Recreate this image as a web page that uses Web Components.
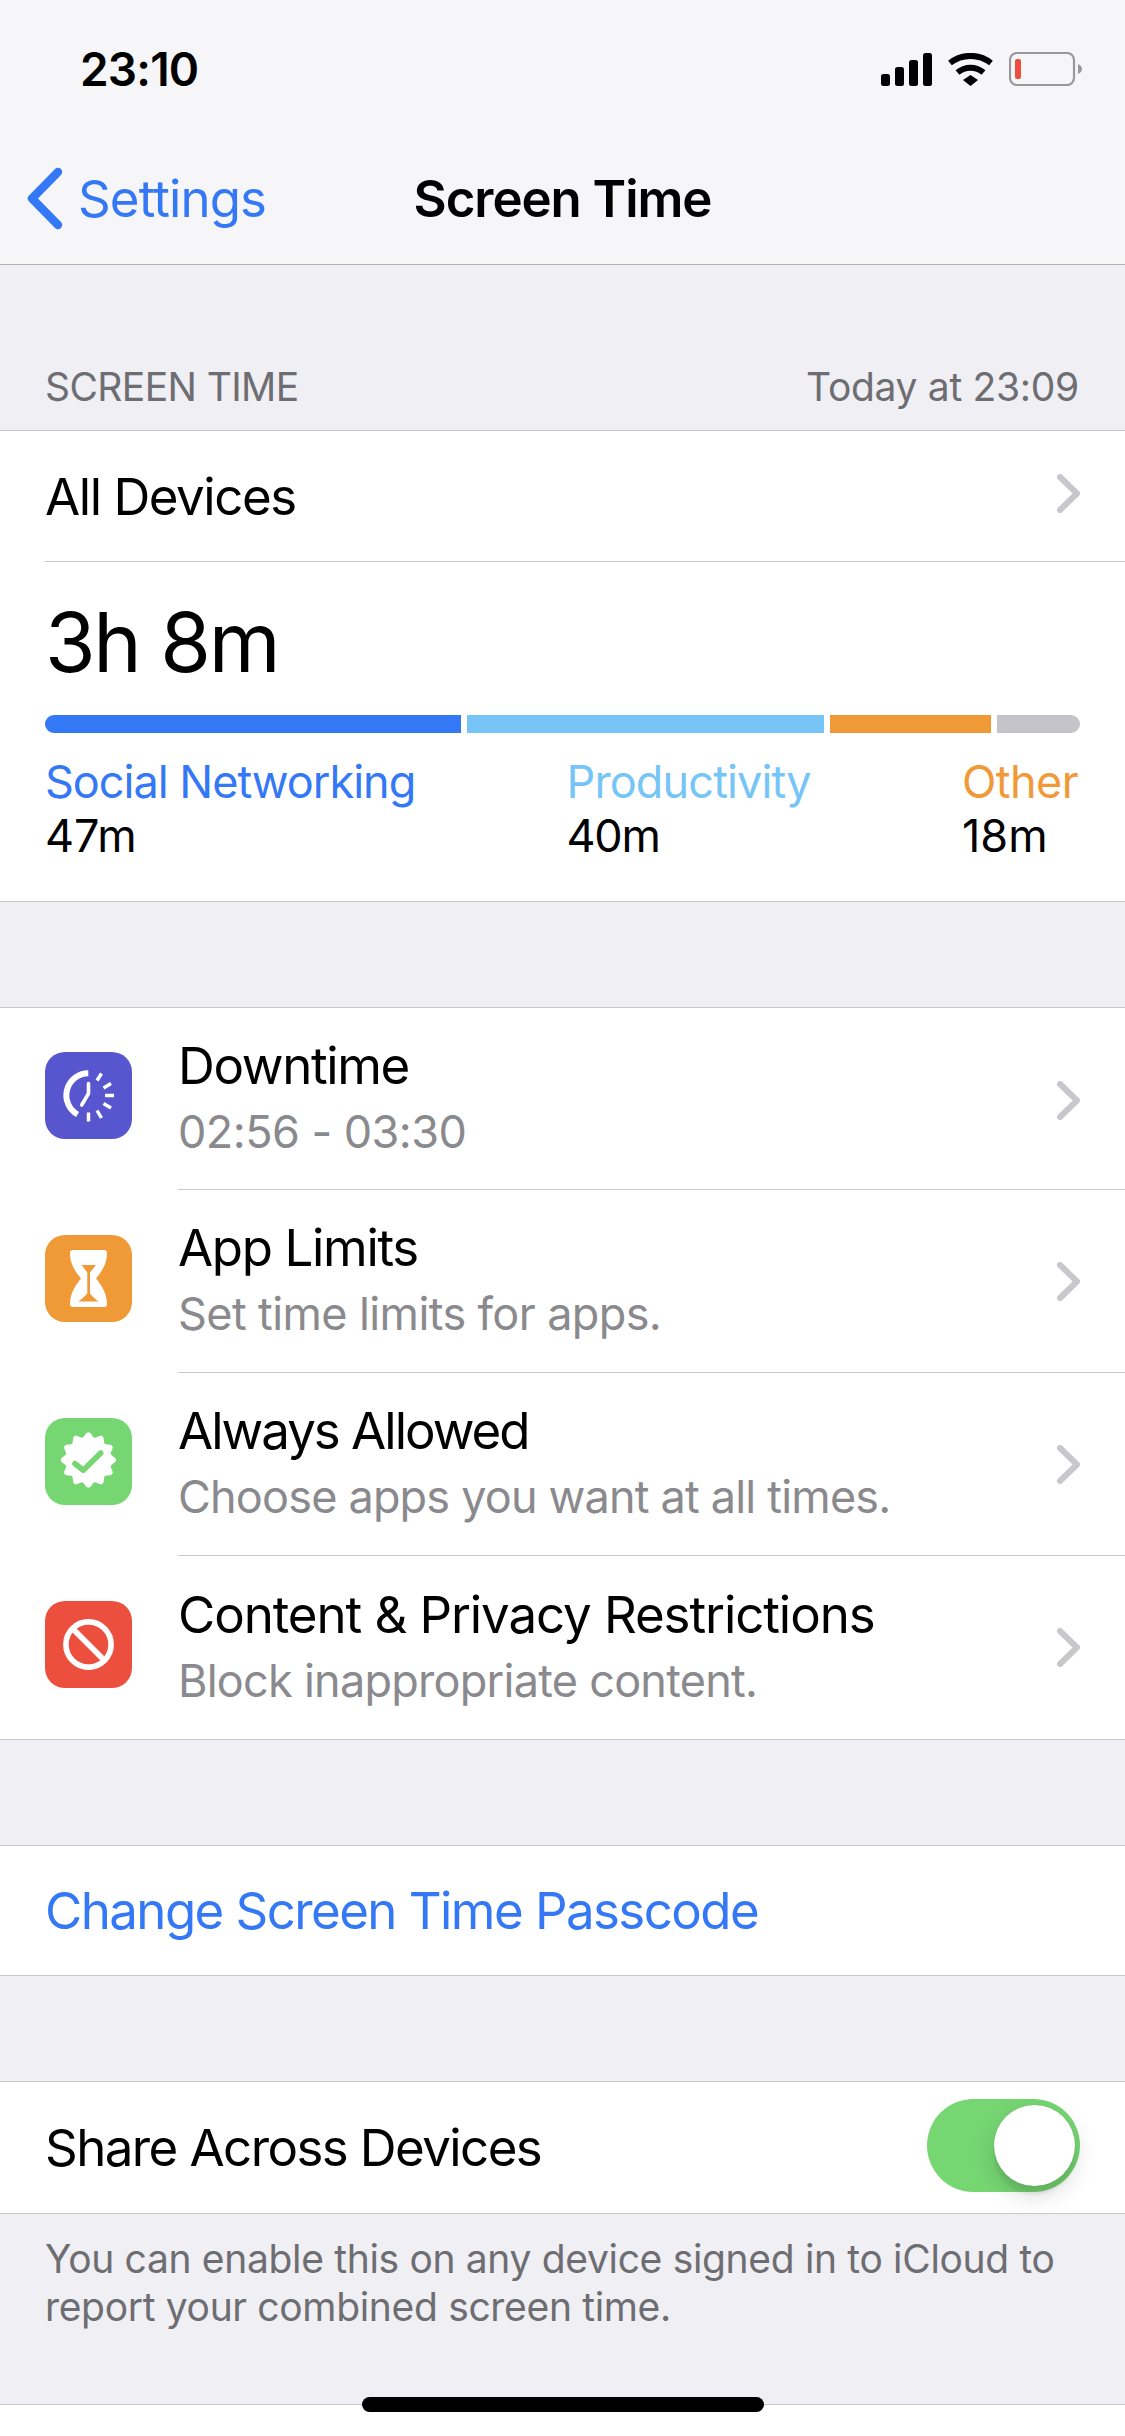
<!DOCTYPE html>
<html lang="en">
<head>
<meta charset="utf-8">
<title>Screen Time</title>
<style>
  html,body{margin:0;padding:0;background:#fff}
  body{width:1125px;height:2436px;overflow:hidden;font-family:'Inter','Liberation Sans',sans-serif;color:#000;position:relative}
</style>
</head>
<body>
<st-nav title-text="Screen Time" back="Settings"></st-nav>
<st-page>
  <st-header left="SCREEN TIME" right="Today at 23:09"></st-header>
  <st-group>
    <st-row label="All Devices" height="131" inset style="--label-ls:-1.45px;--chev-shift:-3px;--label-shift:1.5px"></st-row>
    <st-usage total="3h 8m"></st-usage>
  </st-group>
  <st-gap></st-gap>
  <st-group>
    <st-row label="Downtime" sub="02:56 - 03:30" height="182" inset style="--sub-ls:-.55px;--icon-pad:8px">
      <svg slot="icon" viewBox="0 0 87 87" width="87" height="87">
        <rect width="87" height="87" rx="20" fill="#5856cf"/>
        <path d="M43.3 21.3A22 22 0 0 0 32.6 62.5" fill="none" stroke="#fff" stroke-width="6"/>
        <path d="M43.5 31.5V41.5L36.7 53" fill="none" stroke="#fff" stroke-width="3.6" stroke-linecap="round" stroke-linejoin="round"/>
        <path d="M52 28.5L56.5 21.5M58.5 36L66 31.5M60 43.5H69M58.5 51.5L66 56M52 58.5L56.5 66M43.5 60.5V69.5" fill="none" stroke="#fff" stroke-width="3.4"/>
      </svg>
    </st-row>
    <st-row label="App Limits" sub="Set time limits for apps." height="183" inset style="--sub-ls:-.6px;--chev-shift:0px">
      <svg slot="icon" viewBox="0 0 87 87" width="87" height="87">
        <rect width="87" height="87" rx="20" fill="#f09a37"/>
        <path d="M28 15H59Q62 15 62 18C62 28 58 35 51 43.5C58 52 62 60 62 69Q62 72 59 72H28Q25 72 25 69C25 60 29 52 36 43.5C29 35 25 28 25 18Q25 15 28 15Z" fill="#fff"/>
        <path d="M36.5 30H51L45 37.5V58.5C47 61 50 64 53.5 66.5H33.5C37 64 40 61 42.3 58.5V37.5Z" fill="#f09a37"/>
      </svg>
    </st-row>
    <st-row label="Always Allowed" sub="Choose apps you want at all times." height="183" inset style="--label-ls:-2px;--sub-ls:-.81px;--chev-shift:0px">
      <st-badge slot="icon"></st-badge>
    </st-row>
    <st-row label="Content &amp; Privacy Restrictions" sub="Block inappropriate content." height="183" style="--label-ls:-1.08px;--sub-ls:-.74px;--chev-shift:0px">
      <svg slot="icon" viewBox="0 0 87 87" width="87" height="87">
        <rect width="87" height="87" rx="20" fill="#ec4f3d"/>
        <circle cx="43.5" cy="43.5" r="22.6" fill="none" stroke="#fff" stroke-width="5.6"/>
        <path d="M27.5 27.5L59.5 59.5" stroke="#fff" stroke-width="5.6"/>
      </svg>
    </st-row>
  </st-group>
  <st-gap></st-gap>
  <st-group>
    <st-row label="Change Screen Time Passcode" height="129" tone="link" nochevron style="--label-ls:-1.57px"></st-row>
  </st-group>
  <st-gap></st-gap>
  <st-group>
    <st-row label="Share Across Devices" height="131" nochevron style="--label-ls:-1.58px">
      <st-toggle slot="accessory"></st-toggle>
    </st-row>
  </st-group>
  <st-footer>You can enable this on any device signed in to iCloud to report your combined screen time.</st-footer>
</st-page>
<st-home></st-home>

<script>
  const SEP = '#c8c7cc';
  const CHEVRON = `<svg viewBox="0 0 23 39" width="23" height="39"><path d="M3 3L20 19.5L3 36" fill="none" stroke="#c7c7cc" stroke-width="6" stroke-linecap="round" stroke-linejoin="round"/></svg>`;

  function define(tag, render) {
    customElements.define(tag, class extends HTMLElement {
      connectedCallback() {
        if (this.shadowRoot) return;
        this.attachShadow({ mode: 'open' }).innerHTML = render(this);
      }
    });
  }

  define('st-nav', el => `
    <style>
      :host{display:block;height:264px;background:#f6f6f8;border-bottom:1px solid #b2b2b2;position:relative}
      .status{display:flex;justify-content:space-between;align-items:center;height:138px;padding:0 43px 0 80px;box-sizing:border-box}
      .time{font-size:46px;font-weight:600;letter-spacing:-.8px;line-height:1}
      .icons{display:flex;align-items:center;gap:16px}
      .bar{display:flex;align-items:center;height:120px;padding-left:27px}
      .back{display:flex;align-items:center;gap:15px;color:#3478f6;font-size:51px;letter-spacing:-.9px;line-height:1}
      .title{position:absolute;left:0;right:0;top:138px;height:120px;display:flex;align-items:center;justify-content:center;font-size:51px;font-weight:600;letter-spacing:-1.05px}
    </style>
    <div class="status">
      <span class="time">23:10</span>
      <span class="icons">
        <svg viewBox="0 0 51 33" width="51" height="33"><g fill="#000"><rect x="0" y="21" width="9" height="12" rx="2.5"/><rect x="14" y="14" width="9" height="19" rx="2.5"/><rect x="28" y="7" width="9" height="26" rx="2.5"/><rect x="42" y="0" width="9" height="33" rx="2.5"/></g></svg>
        <svg viewBox="0 0 45 33" width="45" height="33"><path d="M2 10C14 .5 31 .5 43 10" fill="none" stroke="#000" stroke-width="6"/><path d="M9.5 19.5C17 13 28 13 35.5 19.5" fill="none" stroke="#000" stroke-width="6"/><path d="M15 27L22.5 22L30 27L22.5 33Z" fill="#000"/></svg>
        <svg viewBox="0 0 73 34" width="73" height="34"><rect x="1" y="1" width="64" height="32" rx="7" fill="none" stroke="#999" stroke-width="2.2"/><rect x="6" y="7" width="6" height="20" rx="2" fill="#ec4f3d"/><path d="M69 12Q73 14 73 17Q73 20 69 22Z" fill="#999"/></svg>
      </span>
    </div>
    <div class="bar">
      <span class="back">
        <svg viewBox="0 0 36 63" width="36" height="63"><path d="M31 5L5 31.5L31 58" fill="none" stroke="#3478f6" stroke-width="8.4" stroke-linecap="round" stroke-linejoin="round"/></svg>
        <span>${el.getAttribute('back')}</span>
      </span>
    </div>
    <div class="title">${el.getAttribute('title-text')}</div>`);

  define('st-page', () => `
    <style>:host{display:block;background:#efeff4;height:2140px;border-bottom:1px solid ${SEP};box-sizing:border-box}</style>
    <slot></slot>`);

  define('st-header', el => `
    <style>
      :host{display:flex;justify-content:space-between;align-items:flex-end;height:165px;box-sizing:border-box;padding:0 46px 20px 45px;color:#6d6d72;font-size:39px;line-height:46px}
      .l{letter-spacing:-.6px}.r{letter-spacing:-.3px}
    </style>
    <span class="l">${el.getAttribute('left')}</span><span class="r">${el.getAttribute('right')}</span>`);

  define('st-group', () => `
    <style>:host{display:block;background:#fff;border-top:1px solid ${SEP};border-bottom:1px solid ${SEP}}</style>
    <slot></slot>`);

  define('st-gap', () => `<style>:host{display:block;height:105px}</style>`);

  define('st-row', el => {
    const h = el.getAttribute('height');
    const sub = el.getAttribute('sub');
    const link = el.getAttribute('tone') === 'link';
    const hasIcon = !!el.querySelector('[slot=icon]');
    return `
    <style>
      :host{display:flex;height:${h}px;box-sizing:border-box;align-items:stretch;padding-left:45px;position:relative}
      .icon{display:${hasIcon ? 'flex' : 'none'};align-items:center;width:87px;margin-right:46px;flex:none;padding-bottom:var(--icon-pad,6px);box-sizing:border-box}
      .main{flex:1;display:flex;align-items:center;justify-content:space-between;padding-right:45px;min-width:0;box-sizing:border-box;${el.hasAttribute('inset') ? `border-bottom:1px solid ${SEP};` : ''}}
      .text{display:flex;flex-direction:column;padding-bottom:${sub ? 4 : 0}px;padding-top:var(--label-shift,0)}
      .label{font-size:51px;line-height:60px;letter-spacing:var(--label-ls,-1.35px);color:${link ? '#3478f6' : '#000'}}
      .sub{font-size:45px;line-height:52px;margin-top:10px;letter-spacing:var(--sub-ls,-.9px);color:#8a8a8e}
      .chev{display:${el.hasAttribute('nochevron') ? 'none' : 'flex'};transform:translateY(var(--chev-shift,2px))}
    </style>
    <div class="icon"><slot name="icon"></slot></div>
    <div class="main">
      <div class="text"><span class="label">${el.getAttribute('label').replace('&', '&amp;')}</span>${sub ? `<span class="sub">${sub}</span>` : ''}</div>
      <span class="chev">${CHEVRON}</span>
      <slot name="accessory"></slot>
    </div>`;
  });

  // the scalloped seal: a sampled wave round a circle, 12 bumps
  define('st-badge', () => {
    let d = '';
    for (let i = 0; i < 240; i++) {
      const t = i / 240 * Math.PI * 2;
      const r = 25.4 + 2.3 * Math.cos(12 * t);
      d += (i ? 'L' : 'M') + (43.4 + r * Math.sin(t)).toFixed(2) + ' ' + (42 - r * Math.cos(t)).toFixed(2);
    }
    return `
    <style>:host{display:block;width:87px;height:87px}svg{display:block}</style>
    <svg viewBox="0 0 87 87" width="87" height="87">
      <rect width="87" height="87" rx="20" fill="#76d672"/>
      <path fill="#fff" d="${d}Z"/>
      <path d="M30 45.7L38.3 52.2L55.7 35" fill="none" stroke="#76d672" stroke-width="5.6" stroke-linecap="round" stroke-linejoin="round"/>
    </svg>`;
  });

  define('st-usage', el => {
    const cats = [
      { name: 'Social Networking', time: '47m', color: '#3478f6', w: 416, ls: -1, tls: 0 },
      { name: 'Productivity', time: '40m', color: '#76c5f6', w: 357, ls: -.85, tls: -1.2 },
      { name: 'Other', time: '18m', color: '#f09a37', w: 161, ls: -.6, tls: 0 }
    ];
    return `
    <style>
      :host{display:block;height:339px;box-sizing:border-box;padding:0 45px;overflow:hidden}
      .total{font-size:82px;line-height:96px;padding-top:33px;letter-spacing:-2.3px}
      .bar{display:flex;gap:6px;height:18px;margin-top:24px;border-radius:9px;overflow:hidden}
      .bar i{display:block;height:100%}
      .legend{display:flex;justify-content:space-between;margin-top:22px;padding-right:2px}
      .name{font-size:45px;line-height:54px;display:block}
      .time{font-size:45px;line-height:54px;display:block}
    </style>
    <div class="total">${el.getAttribute('total')}</div>
    <div class="bar">
      ${cats.map(c => `<i style="width:${c.w}px;background:${c.color}"></i>`).join('')}
      <i style="flex:1;background:#c4c4c9"></i>
    </div>
    <div class="legend">
      ${cats.map(c => `<div><span class="name" style="color:${c.color};letter-spacing:${c.ls}px">${c.name}</span><span class="time" style="letter-spacing:${c.tls}px">${c.time}</span></div>`).join('')}
    </div>`;
  });

  define('st-toggle', () => `
    <style>
      :host{display:block;width:153px;height:93px;border-radius:47px;background:#76d672;position:relative;margin-bottom:5px}
      .knob{position:absolute;right:5px;top:6px;width:81px;height:81px;border-radius:50%;background:#fff;box-shadow:0 9px 3px rgba(0,0,0,.06),0 9px 24px rgba(0,0,0,.15),0 0 1px rgba(0,0,0,.16)}
    </style>
    <div class="knob"></div>`);

  define('st-footer', () => `
    <style>:host{display:block;padding:21px 45px 0 45px;color:#6d6d72;font-size:39px;line-height:48px;letter-spacing:-.33px}</style>
    <slot></slot>`);

  define('st-home', () => `
    <style>:host{display:block;position:absolute;left:362px;top:2397px;width:402px;height:15px;border-radius:8px;background:#000}</style>`);
</script>
</body>
</html>
